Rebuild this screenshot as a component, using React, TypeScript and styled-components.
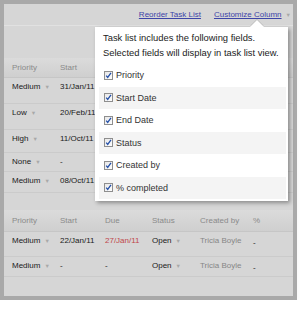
import React from "react";
import styled, { createGlobalStyle } from "styled-components";

const GlobalStyle = createGlobalStyle`
    body {
        margin: 0;
        background: #ffffff;
        font-family: "Liberation Sans", Arial, sans-serif;
    }
`;

const Frame = styled.div`
    position: relative;
    box-sizing: border-box;
    width: 297px;
    height: 300px;
    border: 4px solid #a9a9a9;
    background: #d6d6d6;
    box-shadow: 0 8px 9px -6px rgba(0, 0, 0, 0.28);
`;

const Toolbar = styled.div`
    display: flex;
    justify-content: flex-end;
    align-items: center;
    gap: 13px;
    height: 21px;
    padding-right: 2px;
    border-bottom: 1px solid #e1e1e1;
    font-size: 8px;
`;

const Link = styled.a`
    color: #3d45a8;
    text-decoration: underline;
    cursor: pointer;
`;

const Caret = styled.span`
    color: #a8a8a8;
    font-size: 5.5px;
    margin-left: 4px;
    text-decoration: none;
    display: inline-block;
`;

const Table = styled.div<{ $top: number }>`
    margin-top: ${(p) => p.$top}px;
`;

const Row = styled.div<{ $height: number }>`
    display: grid;
    grid-template-columns: 48px 45px 47px 48px 53px 1fr;
    box-sizing: border-box;
    height: ${(p) => p.$height}px;
    padding: 4px 0 0 8px;
    font-size: 8px;
    line-height: 9px;
    color: #1a1a1a;
    border-bottom: 1px solid #cbcbcb;
`;

const HeadRow = styled(Row)`
    align-items: center;
    padding-top: 0;
    color: #8a8a8a;
    background: linear-gradient(#dbdbdb, #cfcfcf);
    border-bottom: 1px solid #c6c6c6;
`;

const Cell = styled.span<{ $tone?: "red" | "gray" }>`
    white-space: nowrap;
    color: ${(p) =>
        p.$tone === "red" ? "#c0464a" : p.$tone === "gray" ? "#868686" : "inherit"};
`;

const Dash = styled.span`
    position: relative;
    top: 2px;
`;

const Popup = styled.div`
    position: absolute;
    left: 91px;
    top: 23px;
    width: 193px;
    height: 174px;
    box-sizing: border-box;
    padding: 3px 2px 2px 4px;
    background: #ffffff;
    box-shadow: 2px 2px 4px rgba(0, 0, 0, 0.35);

    &::before {
        content: "";
        position: absolute;
        top: -7px;
        left: 155px;
        border-left: 7px solid transparent;
        border-right: 7px solid transparent;
        border-bottom: 7px solid #ffffff;
        filter: drop-shadow(0 -1px 0 rgba(0, 0, 0, 0.12));
    }
`;

const Intro = styled.p`
    margin: 0 0 4px;
    padding-left: 4px;
    font-size: 9.4px;
    line-height: 15px;
    color: #222222;
`;

const Option = styled.label<{ $striped: boolean }>`
    display: flex;
    align-items: center;
    gap: 3px;
    height: 22.5px;
    padding-left: 5px;
    font-size: 9px;
    color: #333333;
    background: ${(p) => (p.$striped ? "#f4f4f4" : "#ffffff")};
`;

const Box = () => (
    <svg width="9" height="9" viewBox="0 0 9 9">
        <defs>
            <linearGradient id="bx" x1="0" y1="0" x2="1" y2="1">
                <stop offset="0" stopColor="#e6e6e6" />
                <stop offset="1" stopColor="#ffffff" />
            </linearGradient>
        </defs>
        <rect x="0.5" y="0.5" width="8" height="8" fill="url(#bx)" stroke="#8e8e8e" />
        <path d="M2.2 4.6 L3.7 6.4 L7 1.8" fill="none" stroke="#2450a8" strokeWidth="1.3" />
    </svg>
);

const fields = ["Priority", "Start Date", "End Date", "Status", "Created by", "% completed"];

// only the first two columns show; the rest sit under the popup
const firstRows = [
    { h: 26, p: "Medium", s: "31/Jan/11" },
    { h: 26, p: "Low", s: "20/Feb/11" },
    { h: 23, p: "High", s: "11/Oct/11" },
    { h: 19, p: "None", s: "-" },
    { h: 21, p: "Medium", s: "08/Oct/11" },
];

function App() {
    return (
        <>
            <GlobalStyle />
            <Frame>
                <Toolbar>
                    <Link>Reorder Task List</Link>
                    <span>
                        <Link>Customize Column</Link>
                        <Caret>▼</Caret>
                    </span>
                </Toolbar>

                <Table $top={32}>
                    <HeadRow $height={20}>
                        <Cell>Priority</Cell>
                        <Cell>Start</Cell>
                    </HeadRow>
                    {firstRows.map((r, i) => (
                        <Row key={i} $height={r.h}>
                            <Cell>
                                {r.p}
                                <Caret>▼</Caret>
                            </Cell>
                            <Cell>{r.s}</Cell>
                        </Row>
                    ))}
                </Table>

                <Table $top={17}>
                    <HeadRow $height={22}>
                        <Cell>Priority</Cell>
                        <Cell>Start</Cell>
                        <Cell>Due</Cell>
                        <Cell>Status</Cell>
                        <Cell>Created by</Cell>
                        <Cell>%</Cell>
                    </HeadRow>
                    <Row $height={25}>
                        <Cell>
                            Medium<Caret>▼</Caret>
                        </Cell>
                        <Cell>22/Jan/11</Cell>
                        <Cell $tone="red">27/Jan/11</Cell>
                        <Cell>
                            Open<Caret>▼</Caret>
                        </Cell>
                        <Cell $tone="gray">Tricia Boyle</Cell>
                        <Cell>
                            <Dash>-</Dash>
                        </Cell>
                    </Row>
                    <Row $height={20}>
                        <Cell>
                            Medium<Caret>▼</Caret>
                        </Cell>
                        <Cell>-</Cell>
                        <Cell>-</Cell>
                        <Cell>
                            Open<Caret>▼</Caret>
                        </Cell>
                        <Cell $tone="gray">Tricia Boyle</Cell>
                        <Cell>
                            <Dash>-</Dash>
                        </Cell>
                    </Row>
                </Table>

                <Popup>
                    <Intro>
                        Task list includes the following fields.
                        <br />
                        Selected fields will display in task list view.
                    </Intro>
                    {fields.map((f, i) => (
                        <Option key={f} $striped={i % 2 === 1}>
                            <Box />
                            {f}
                        </Option>
                    ))}
                </Popup>
            </Frame>
        </>
    );
}

export default App;
